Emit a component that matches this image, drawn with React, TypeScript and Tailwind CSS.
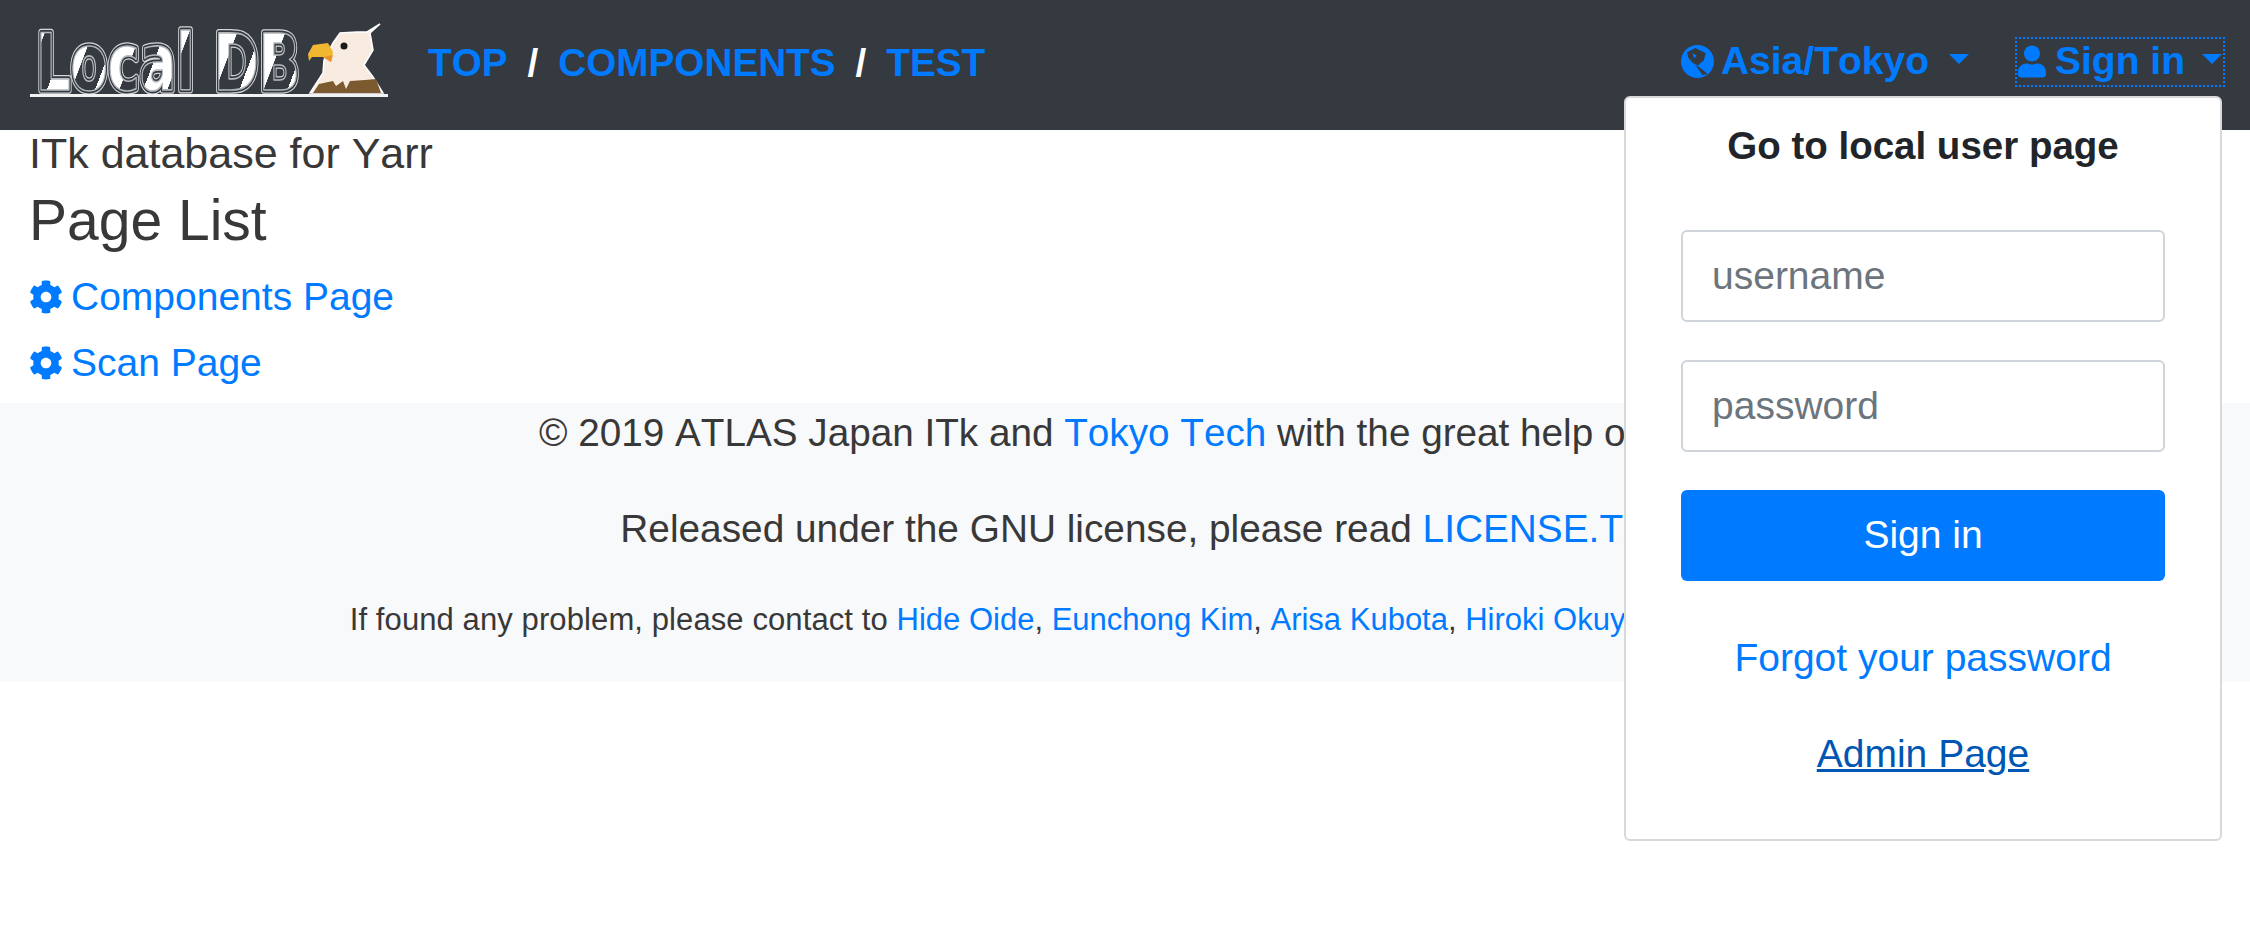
import { FaCog, FaUser } from 'react-icons/fa';

const Logo = () => (
    <svg width="362" height="90" viewBox="29 20 362 90" className="block shrink-0">
        <defs>
            <linearGradient id="logo-patches" x1="33" y1="0" x2="75" y2="16" gradientUnits="userSpaceOnUse" spreadMethod="repeat">
                <stop offset="0" stopColor="#ffffff" />
                <stop offset="0.5" stopColor="#ffffff" />
                <stop offset="0.51" stopColor="#343a40" />
                <stop offset="1" stopColor="#343a40" />
            </linearGradient>
            <text id="logo-word" x="36" y="90" fontFamily="'DejaVu Sans', sans-serif" fontWeight="700" fontSize="78" textLength="264" lengthAdjust="spacingAndGlyphs">
                Local DB
            </text>
        </defs>
        <use href="#logo-word" fill="none" stroke="#d4d6d8" strokeWidth="7.5" strokeLinejoin="round" />
        <use href="#logo-word" fill="none" stroke="#343a40" strokeWidth="5" strokeLinejoin="round" />
        <use href="#logo-word" fill="url(#logo-patches)" stroke="#b4b8bc" strokeWidth="1.6" strokeLinejoin="round" />
        <path d="M30 97V94H305L388 94V97Z" fill="#f2f2f2" />
        <path d="M380 24L370 33L373 50L364 65L373 77L383 93H310L323 73L324 60L333 43L340 33L357 32L367 32Z" fill="#f8ece0" stroke="#ffffff" strokeWidth="1.5" />
        <path d="M313 93L319 84L333 81L336 86L343 81L346 89L350 81L365 80L376 79L381 93Z" fill="#7b5a30" />
        <path d="M308 54L313 45L328 43L333 52L331 62L323 57L312 57L309 61Z" fill="#f2b731" />
        <path d="M323 57L333 55L331 62Z" fill="#ee8f2e" />
        <circle cx="344" cy="46" r="3.5" fill="#1b1b1b" />
    </svg>
);

const Globe = () => (
    <svg width="33" height="33" viewBox="0 0 32 32" className="block shrink-0 mr-[7px]">
        <circle cx="16" cy="16" r="16" fill="#007bff" />
        <path d="M6 7L14 3L24 8L22 15L16 20L11 17L7 12Z" fill="#343a40" />
        <path d="M11 8L15 10L13 13Z" fill="#007bff" />
        <path d="M16 20L26 28L21 29L15 21Z" fill="#343a40" />
    </svg>
);

const Caret = () => <span className="inline-block w-0 h-0 border-x-[10px] border-x-transparent border-t-[10px] border-t-[#007bff]"></span>;

const A = (props: { children: string }) => <a className="text-[#007bff]">{props.children}</a>;

const LoginMenu = () => (
    <div className="absolute left-[1624px] top-[96px] w-[598px] h-[745px] bg-white border-2 border-[#d9d9d9] rounded-[6px] px-[55px] flex flex-col items-stretch text-center">
        <h5 className="text-[#212529] font-bold text-[38.5px] leading-[46px] mt-[25px] whitespace-nowrap">Go to local user page</h5>
        <input placeholder="username" className="mt-[61px] h-[92px] px-[29px] text-[39px] border-2 border-[#ced4da] rounded-[6px] placeholder:text-[#6c757d]" />
        <input placeholder="password" className="mt-[38px] h-[92px] px-[29px] text-[39px] border-2 border-[#ced4da] rounded-[6px] placeholder:text-[#6c757d]" />
        <button className="mt-[38px] h-[91px] bg-[#007bff] text-white text-[39px] rounded-[6px]">Sign in</button>
        <a className="mt-[54px] text-[#007bff] text-[39px] leading-[46px]">Forgot your password</a>
        <a className="mt-[50px] text-[#0056b3] text-[39px] leading-[46px] underline">Admin Page</a>
    </div>
);

const App = () => {
    return (
        <div className="relative min-h-[940px] bg-white text-[#383838] text-[39px] [font-kerning:none] font-['Liberation_Sans',Arial,sans-serif]">
            <nav className="h-[130px] bg-[#343a40] flex items-center pl-[29px] pr-[27px] font-bold">
                <Logo />
                <div className="flex items-center ml-[37px] mb-[3px] gap-[20px] text-white text-[38.7px]">
                    <a className="text-[#007bff]">TOP</a>
                    <span>/</span>
                    <a className="text-[#007bff]">COMPONENTS</a>
                    <span>/</span>
                    <a className="text-[#007bff]">TEST</a>
                </div>
                <div className="ml-auto flex items-center text-[#007bff] mb-[7px]">
                    <Globe />
                    <span>Asia/Tokyo</span>
                    <span className="ml-[20px] mt-[-6px] flex"><Caret /></span>
                    <div className="ml-[48px] w-[206px] h-[46px] pl-[1px] pr-[1px] flex items-center outline-2 outline-dotted outline-[#007bff]">
                        <FaUser className="w-[28px] h-[33px] shrink-0" />
                        <span className="ml-[9px]">Sign in</span>
                        <span className="ml-auto mt-[-6px] flex"><Caret /></span>
                    </div>
                </div>
            </nav>
            <main className="pl-[29px] h-[273px]">
                <div className="text-[43px] leading-[46px]">ITk database for Yarr</div>
                <h1 className="text-[57px] leading-[68px] mt-[10px]">Page List</h1>
                <div className="flex items-center gap-[8px] text-[#007bff] h-[46px] mt-[20px]">
                    <FaCog className="w-[34px] h-[34px]" />
                    <a>Components Page</a>
                </div>
                <div className="flex items-center gap-[8px] text-[#007bff] h-[46px] mt-[20px]">
                    <FaCog className="w-[34px] h-[34px]" />
                    <a>Scan Page</a>
                </div>
            </main>
            <footer className="h-[279px] bg-[#f8f9fa] text-center pt-[7px]">
                <p className="text-[38.7px] leading-[46px] whitespace-nowrap pl-[9px]">
                    © 2019 ATLAS Japan ITk and <A>Tokyo Tech</A> with the great help of <A>Yarr</A>
                </p>
                <p className="text-[38.8px] leading-[46px] mt-[50px] whitespace-nowrap pl-[43px]">
                    Released under the GNU license, please read <A>LICENSE.TXT</A>
                </p>
                <p className="text-[31px] leading-[38px] mt-[49px] whitespace-nowrap pl-[56px]">
                    <span className="tracking-[0.1px]">If found any problem, please contact to </span><A>Hide Oide</A>, <A>Eunchong Kim</A>, <A>Arisa Kubota</A>, <A>Hiroki Okuyama</A>, <A>Shohei Yamagaya</A>
                </p>
            </footer>
            <LoginMenu />
        </div>
    );
};

export default App;
